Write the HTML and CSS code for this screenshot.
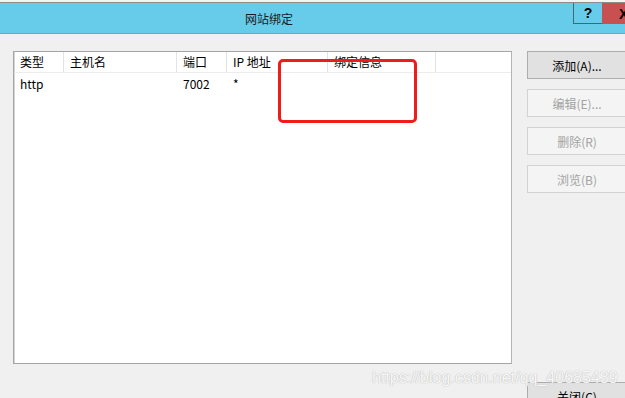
FILE: index.html
```html
<!DOCTYPE html>
<html lang="zh-CN">
<head>
  <meta charset="UTF-8">
  <title>网站绑定</title>
  <link rel="stylesheet" href="styles.css">
</head>
<body>
  <div class="window">
    <div class="top-strip"></div>
    <!-- Title bar -->
    <header class="titlebar">
      <span class="title">网站绑定</span>
      <div class="caption-buttons">
        <button class="caption help">?</button>
        <button class="caption close">X</button>
      </div>
    </header>

    <main class="dialog">
      <!-- Binding list -->
      <div class="list-box">
        <div class="list-row list-head">
          <div class="cell c-type">类型</div>
          <div class="cell c-host">主机名</div>
          <div class="cell c-port">端口</div>
          <div class="cell c-ip">IP 地址</div>
          <div class="cell c-info">绑定信息</div>
          <div class="cell c-rest"></div>
        </div>
        <div class="list-row">
          <div class="cell c-type">http</div>
          <div class="cell c-host"></div>
          <div class="cell c-port">7002</div>
          <div class="cell c-ip">*</div>
          <div class="cell c-info"></div>
          <div class="cell c-rest"></div>
        </div>
        <div class="highlight"></div>
      </div>

      <!-- Action buttons -->
      <div class="side">
        <div class="actions">
          <button class="btn">添加(A)...</button>
          <button class="btn" disabled>编辑(E)...</button>
          <button class="btn" disabled>删除(R)</button>
          <button class="btn" disabled>浏览(B)</button>
        </div>
        <button class="btn close-btn">关闭(C)</button>
      </div>

      <div class="watermark">https://blog.csdn.net/qq_40685439</div>
    </main>
  </div>
</body>
</html>
```

FILE: styles.css
```css
* {
  box-sizing: border-box;
}

body {
  margin: 0;
  font-family: "Noto Sans CJK SC", "Microsoft YaHei", sans-serif;
  font-size: 12px;
  background: #f0f0f0;
  overflow: hidden;
}

.window {
  width: 625px;
  height: 398px;
  overflow: hidden;
  display: flex;
  flex-direction: column;
}

.top-strip {
  height: 3px;
  background: #f4f4f4;
  border-bottom: 1px solid #8c8c8c;
  flex-shrink: 0;
}

.titlebar {
  height: 31px;
  flex-shrink: 0;
  background: #67cbea;
  border-bottom: 1px solid #58afcc;
  display: flex;
  justify-content: space-between;
  align-items: flex-start;

  .title {
    margin: 8px 0 0 245px;
    color: #1b1b1b;
    font-size: 12px;
    line-height: 16px;
  }
}

.caption-buttons {
  display: flex;

  .caption {
    height: 21px;
    border: none;
    padding: 0;
    font-family: "Liberation Sans", Arial, sans-serif;
    font-weight: bold;
    font-size: 14px;
    line-height: 20px;
    color: #000;
  }

  .help {
    width: 29px;
    background: #67cbea;
    border-left: 1px solid #3d6a7a;
    border-bottom: 1px solid #3d6a7a;
  }

  .close {
    width: 23px;
    background: #c75050;
    text-align: left;
    padding-left: 17px;
    overflow: hidden;
  }
}

.dialog {
  position: relative;
  flex: 1;
  display: flex;
  gap: 15px;
  padding: 17px 0 0 13px;
}

.list-box {
  position: relative;
  width: 499px;
  height: 313px;
  flex-shrink: 0;
  background: #fff;
  border: 1px solid #a5a5a5;
  border-right-color: #b4b4b4;
  box-shadow: inset 1px 0 0 #d6d6d6;
}

.list-row {
  display: flex;
  height: 22px;
  align-items: center;

  .cell {
    height: 100%;
    padding-left: 6px;
    line-height: 22px;
    color: #000;
    white-space: nowrap;
  }

  .c-type { width: 50px; }
  .c-host { width: 113px; }
  .c-port { width: 50px; }
  .c-ip { width: 101px; }
  .c-info { width: 108px; }
  .c-rest { flex: 1; }
}

.list-head {
  height: 21px;
  border-bottom: 1px solid #ececec;

  .cell {
    line-height: 19px;
    border-right: 1px solid #e3e3e3;
  }

  .c-rest {
    border-right: none;
  }
}

.highlight {
  position: absolute;
  left: 264px;
  top: 7px;
  width: 139px;
  height: 64px;
  border: 3px solid #ee1c1c;
  border-radius: 5px;
}

.side {
  display: flex;
  flex-direction: column;
  justify-content: space-between;
  width: 100px;
  flex-shrink: 0;
}

.actions {
  display: flex;
  flex-direction: column;
  gap: 10px;
}

.btn {
  width: 100px;
  height: 28px;
  padding: 0;
  font-family: "Noto Sans CJK SC", "Microsoft YaHei", sans-serif;
  font-size: 12px;
  color: #000;
  background: #e1e1e1;
  border: 1px solid #adadad;

  &:disabled {
    color: #a3a3a3;
    background: #f4f4f4;
    border-color: #d2d2d2;
  }
}

.close-btn {
  margin-bottom: -16px;
  transform: translateY(-4px);
}

.watermark {
  position: absolute;
  left: 372px;
  top: 335px;
  font-family: "Liberation Sans", Arial, sans-serif;
  font-size: 16px;
  color: rgba(255, 255, 255, 0.9);
  text-shadow: 0 0 1px #bdbdbd, 0 0 1px #bdbdbd;
  white-space: nowrap;
}
```
